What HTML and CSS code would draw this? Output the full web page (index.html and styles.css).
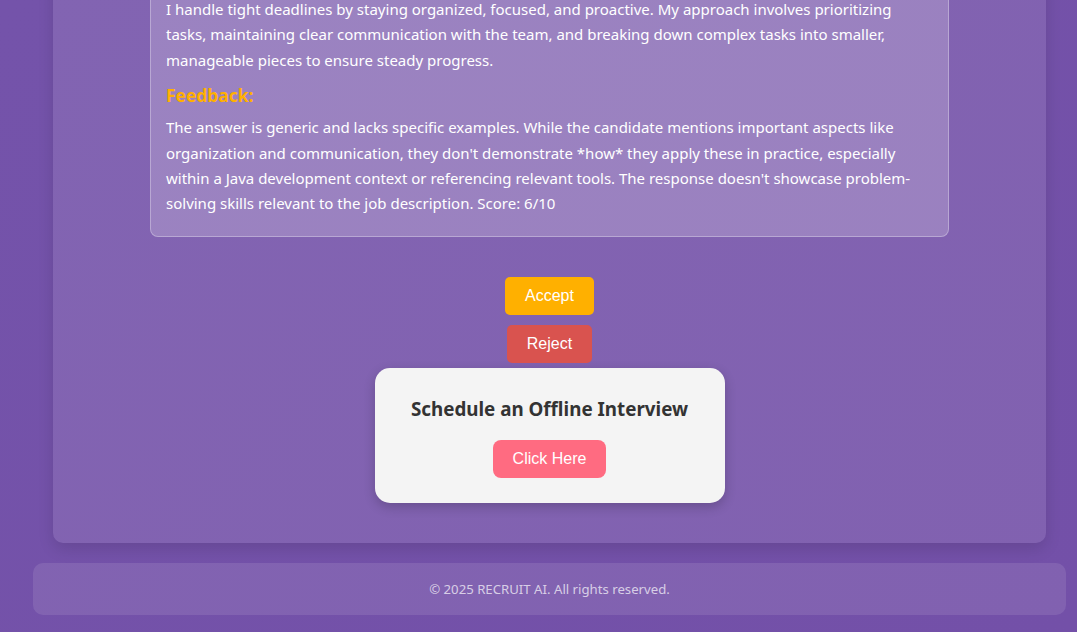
FILE: index.html
```html
<!DOCTYPE html>
<html lang="en">
<head>
<meta charset="utf-8">
<title>RECRUIT AI</title>
<link rel="stylesheet" href="styles.css">
</head>
<body>
<div class="page">
  <main class="panel">
    <section class="qa-card">
      <p class="answer">I handle tight deadlines by staying organized, focused, and proactive. My approach involves prioritizing tasks, maintaining clear communication with the team, and breaking down complex tasks into smaller, manageable pieces to ensure steady progress.</p>
      <h4 class="feedback-title">Feedback:</h4>
      <p class="feedback">The answer is generic and lacks specific examples. While the candidate mentions important aspects like organization and communication, they don't demonstrate *how* they apply these in practice, especially within a Java development context or referencing relevant tools. The response doesn't showcase problem-solving skills relevant to the job description. Score: 6/10</p>
    </section>
    <div class="actions">
      <button class="btn btn-accept">Accept</button>
      <button class="btn btn-reject">Reject</button>
    </div>
    <div class="schedule">
      <h3>Schedule an Offline Interview</h3>
      <button class="btn btn-click">Click Here</button>
    </div>
  </main>
  <footer class="footer">© 2025 RECRUIT AI. All rights reserved.</footer>
</div>
</body>
</html>
```
FILE: styles.css
```css
html, body {
  margin: 0;
  padding: 0;
}
body {
  background: linear-gradient(135deg, #7453aa 0%, #7350a8 100%);
  font-family: "Segoe UI", "Noto Sans", "Open Sans", sans-serif;
  color: #fff;
  height: 632px;
  overflow: hidden;
}
.page {
  margin-top: -59px;
  padding: 0 11px 17px 33px;
}
.panel {
  margin: 0 20px;
  padding: 40px 97px 40px 97px;
  background: rgba(255, 255, 255, 0.1);
  border-radius: 10px;
  box-shadow: 0 6px 16px rgba(0, 0, 0, 0.12);
}
.qa-card {
  background: rgba(255, 255, 255, 0.2);
  border: 1px solid rgba(255, 255, 255, 0.3);
  border-radius: 8px;
  padding: 15px 15px 19px 15px;
  font-size: 15px;
  line-height: 25.4px;
}
.answer, .feedback {
  margin: 0;
}
.feedback-title {
  margin: 11px 0 9px;
  font-size: 17.4px;
  line-height: 22px;
  color: #ffb000;
  font-weight: 700;
}
.actions {
  display: flex;
  flex-direction: column;
  align-items: center;
  gap: 10px;
  margin-top: 40px;
}
.btn {
  font-family: "Liberation Sans", Arial, sans-serif;
  font-size: 16px;
  line-height: 18px;
  color: #fff;
  border: none;
  padding: 10px 20px;
  border-radius: 5px;
  cursor: pointer;
}
.btn-accept {
  background: #ffb000;
}
.btn-reject {
  background: #d9534f;
}
.schedule {
  width: 350px;
  box-sizing: border-box;
  margin: 5px auto 0;
  padding: 25px 20px;
  background: #f4f4f4;
  border-radius: 15px;
  box-shadow: 0 4px 12px rgba(0, 0, 0, 0.2);
  text-align: center;
}
.schedule h3 {
  margin: 0 0 15px;
  font-size: 18.8px;
  line-height: 32px;
  color: #333;
  font-weight: 700;
}
.btn-click {
  background: #ff6b81;
  border-radius: 8px;
}
.footer {
  margin-top: 20px;
  height: 52px;
  display: flex;
  align-items: center;
  justify-content: center;
  background: rgba(255, 255, 255, 0.1);
  border-radius: 10px;
  font-size: 13.2px;
  color: rgba(255, 255, 255, 0.7);
}
```
